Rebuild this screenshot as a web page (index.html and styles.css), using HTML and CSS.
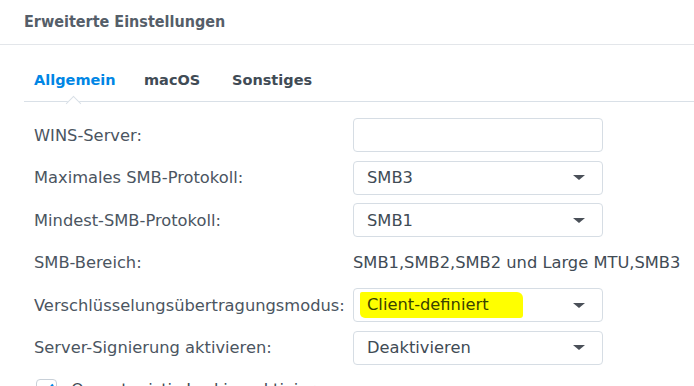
FILE: index.html
```html
<!DOCTYPE html>
<html lang="de">
<head>
    <meta charset="UTF-8">
    <title>Erweiterte Einstellungen</title>
    <link rel="stylesheet" href="styles.css">
</head>
<body>

<div class="dialog">
    <div class="dialog-header">Erweiterte Einstellungen</div>

    <div class="tabs">
        <span class="tab active">Allgemein</span>
        <span class="tab">macOS</span>
        <span class="tab">Sonstiges</span>
    </div>

    <div class="form">
        <div class="row">
            <label class="label">WINS-Server:</label>
            <div class="field"></div>
        </div>
        <div class="row">
            <label class="label">Maximales SMB-Protokoll:</label>
            <div class="field select"><span>SMB3</span><i class="caret"></i></div>
        </div>
        <div class="row">
            <label class="label">Mindest-SMB-Protokoll:</label>
            <div class="field select"><span>SMB1</span><i class="caret"></i></div>
        </div>
        <div class="row">
            <label class="label">SMB-Bereich:</label>
            <div class="value">SMB1,SMB2,SMB2 und Large MTU,SMB3</div>
        </div>
        <div class="row">
            <label class="label">Verschlüsselungsübertragungsmodus:</label>
            <div class="field select"><span class="marker">Client-definiert</span><i class="caret"></i></div>
        </div>
        <div class="row">
            <label class="label">Server-Signierung aktivieren:</label>
            <div class="field select"><span>Deaktivieren</span><i class="caret"></i></div>
        </div>
        <div class="check-row">
            <span class="checkbox">
                <svg width="21" height="21" viewBox="0 0 21 21"><path d="M5 10.5l4 4 8-9" fill="none" stroke="#0086e5" stroke-width="2.2"/></svg>
            </span>
            <span class="check-label">Opportunistic Locking aktivieren</span>
        </div>
    </div>
</div>

</body>
</html>
```

FILE: styles.css
```css
body {
    margin: 0;
    background: #fff;
    font-family: 'DejaVu Sans', sans-serif;
    color: #4b5561;
    overflow: hidden;
}
.dialog {
    width: 694px;
    height: 386px;
    overflow: hidden;
}
.dialog-header {
    height: 45px;
    box-sizing: border-box;
    padding: 12px 24px 0;
    font-family: 'DejaVu Sans Condensed', 'DejaVu Sans', sans-serif;
    font-size: 16px;
    font-weight: bold;
    color: #555e69;
    border-bottom: 1px solid #e3e6ea;
}
.tabs {
    position: relative;
    display: flex;
    margin: 0 0 0 24px;
    padding: 27px 0 0 10px;
    height: 57px;
    box-sizing: border-box;
    border-bottom: 1px solid #d9e0e7;
}
.tab {
    font-size: 14.5px;
    font-weight: bold;
    color: #414b55;
}
.tab.active {
    position: relative;
    width: 110px;
    color: #0086e5;
}
.tab:nth-child(2) {
    width: 88px;
}
/* little notch under the active tab */
.tab.active::after {
    content: '';
    position: absolute;
    left: 39px;
    top: 26px;
    width: 10px;
    height: 10px;
    margin-left: -5px;
    background: #fff;
    border-left: 1px solid #d9e0e7;
    border-top: 1px solid #d9e0e7;
    transform: rotate(45deg);
}
.form {
    padding: 16px 0 0 34px;
}
.row {
    display: flex;
    align-items: center;
    height: 34px;
    margin-bottom: 8.6px;
}
.label {
    width: 319px;
    font-size: 16.3px;
    color: #4b5561;
}
.field {
    width: 250px;
    height: 34px;
    box-sizing: border-box;
    border: 1px solid #d6dde4;
    border-radius: 4px;
    display: flex;
    align-items: center;
    padding: 0 17px 0 13px;
    font-size: 16.3px;
    color: #414b55;
}
.select {
    justify-content: space-between;
}
.caret {
    width: 0;
    height: 0;
    border-left: 6px solid transparent;
    border-right: 6px solid transparent;
    border-top: 5px solid #4a5058;
}
.value {
    font-size: 16.3px;
    color: #414b55;
    white-space: nowrap;
}
.marker {
    background: #ffff00;
    color: #3a4200;
    margin-left: -7px;
    padding: 3px 34px 4px 7px;
    border-radius: 2px 6px 3px 5px;
}
.check-row {
    display: flex;
    align-items: center;
    gap: 14px;
    padding-left: 2px;
    margin-top: 14px;
}
.checkbox {
    width: 21px;
    height: 21px;
    box-sizing: border-box;
    border: 1px solid #c8d0d8;
    border-radius: 4px;
}
.checkbox svg {
    display: block;
    margin: -1px;
}
.check-label {
    font-size: 16.3px;
    color: #414b55;
}
```
